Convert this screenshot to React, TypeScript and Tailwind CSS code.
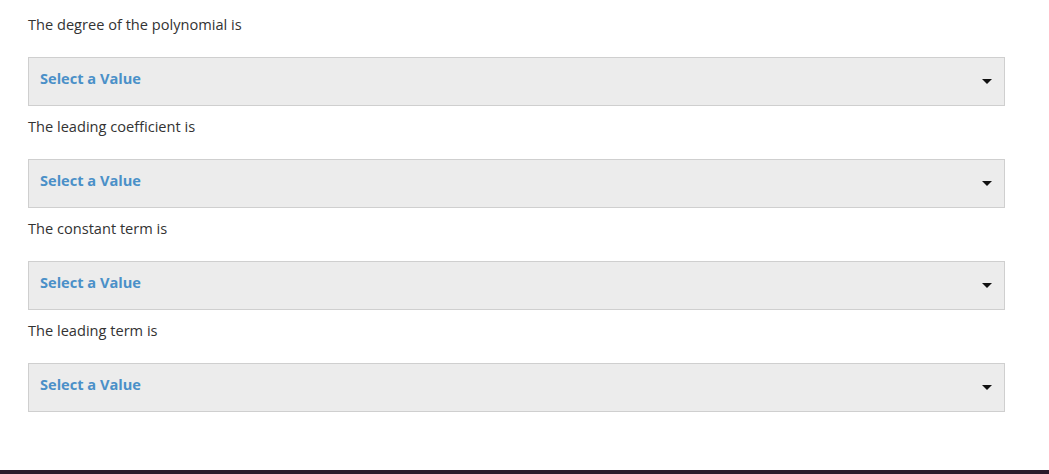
const fields = [
  "The degree of the polynomial is",
  "The leading coefficient is",
  "The constant term is",
  "The leading term is",
];

export default function App() {
  return (
    <div className="min-h-screen bg-white font-['Open_Sans',sans-serif] flex flex-col">
      <div className="pl-[28px] pr-[44px] pt-[14px]">
        {fields.map((label, i) => (
          <div key={i} className={i > 0 ? "mt-[10px]" : ""}>
            <p className="text-[14.6px] leading-[20px] text-[#333]">{label}</p>
            <div className="relative mt-[23px] h-[49px] w-full cursor-pointer border border-[#cfcfcf] bg-[#ececec] pl-[11px] pr-[12px] pt-[10px]">
              <span className="block text-[14.6px] leading-[20px] font-bold text-[#4a90c8]">Select a Value</span>
              <svg width="10" height="5" viewBox="0 0 10 5" className="absolute right-[12px] top-[21px]">
                <path d="M0 0h10L5 5z" fill="#111" />
              </svg>
            </div>
          </div>
        ))}
      </div>
      <div className="mt-[58px] h-[40px] bg-[#2b1a2b]" />
    </div>
  );
}
